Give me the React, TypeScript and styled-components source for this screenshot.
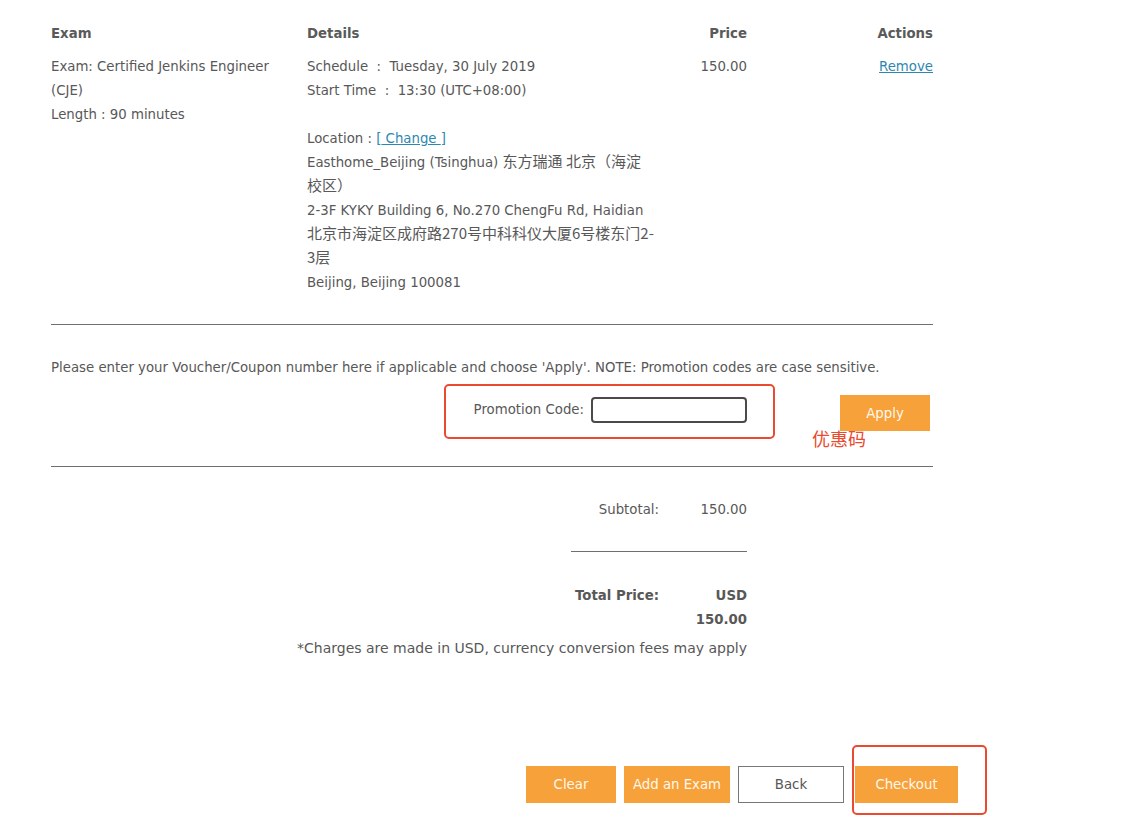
import React from "react";
import styled, { createGlobalStyle } from "styled-components";

const GlobalStyle = createGlobalStyle`
  body {
    margin: 0;
    background: #ffffff;
    font-family: "DejaVu Sans", "Noto Sans CJK SC", sans-serif;
    font-size: 13.3px;
    line-height: 24px;
    color: #585858;
  }
`;

const ORANGE = "#f7a13a";
const LINK = "#2d88b0";
const RED = "#ea4a30";

const Page = styled.div`
  padding: 22px 0 40px 51px;
  width: 907px;
`;

const Table = styled.div`
  width: 882px;
  display: grid;
  grid-template-columns: 256px 350px 90px 186px;
  padding-bottom: 29px;
  border-bottom: 1px solid #6f6f6f;
`;

const HeadCell = styled.div<{ $right?: boolean }>`
  font-weight: bold;
  color: #5a5a5a;
  margin-bottom: 9px;
  text-align: ${(p) => (p.$right ? "right" : "left")};
`;

const Cell = styled.div<{ $right?: boolean; $pad?: number }>`
  text-align: ${(p) => (p.$right ? "right" : "left")};
  padding-right: ${(p) => p.$pad ?? 0}px;
`;

const Line = styled.div`
  line-height: 24px;
`;

const Blank = styled.div`
  height: 24px;
`;

const Han = styled.span`
  font-family: "Noto Sans CJK SC", sans-serif;
  font-size: 15px;
  line-height: 1;
`;

const Link = styled.a`
  color: ${LINK};
  text-decoration: underline;
  cursor: pointer;
`;

const Bracket = styled.span`
  color: ${LINK};
`;

const PromoSection = styled.div`
  width: 882px;
  border-bottom: 1px solid #6f6f6f;
  padding-top: 31px;
  padding-bottom: 35px;
`;

const Note = styled.p`
  margin: 0;
`;

const PromoRow = styled.div`
  position: relative;
  margin-top: 15px;
  display: flex;
  align-items: flex-start;
`;

const PromoField = styled.label`
  width: 696px;
  margin-top: 2px;
  display: flex;
  justify-content: flex-end;
  align-items: center;
  gap: 7px;
  height: 26px;
`;

const CodeInput = styled.input`
  box-sizing: border-box;
  width: 156px;
  height: 26px;
  border: 2px solid #4a4a4a;
  border-radius: 4px;
  background: #fff;
  margin: 0;
  padding: 0 4px;
`;

const Button = styled.button<{ $variant?: "primary" | "plain"; $w: number }>`
  box-sizing: border-box;
  width: ${(p) => p.$w}px;
  height: 37px;
  margin: 0;
  padding: 0;
  border: ${(p) => (p.$variant === "plain" ? "1px solid #777" : "none")};
  background: ${(p) => (p.$variant === "plain" ? "#ffffff" : ORANGE)};
  color: ${(p) => (p.$variant === "plain" ? "#555" : "#fff8ec")};
  font-family: "DejaVu Sans", sans-serif;
  font-size: 13.3px;
  position: relative;
  cursor: pointer;
`;

const ApplyButton = styled(Button)`
  margin-left: 93px;
  height: 36px;
`;

const Annotation = styled.div<{ $top: number; $left: number; $w: number; $h: number }>`
  position: absolute;
  top: ${(p) => p.$top}px;
  left: ${(p) => p.$left}px;
  width: ${(p) => p.$w}px;
  height: ${(p) => p.$h}px;
  box-sizing: border-box;
  border: 2px solid ${RED};
  border-radius: 5px;
  pointer-events: none;
`;

const AnnotationText = styled.span`
  position: absolute;
  top: 31px;
  left: 761px;
  font-family: "Noto Sans CJK SC", sans-serif;
  font-size: 18px;
  line-height: 24px;
  color: ${RED};
`;

const Summary = styled.div`
  width: 696px;
  padding-top: 31px;
  display: flex;
  flex-direction: column;
  align-items: flex-end;
`;

const SumRow = styled.div<{ $bold?: boolean }>`
  display: grid;
  grid-template-columns: 120px 88px;
  font-weight: ${(p) => (p.$bold ? "bold" : "normal")};
`;

const SumLabel = styled.div`
  text-align: right;
`;

const SumValue = styled.div`
  text-align: right;
  padding-left: 24px;
`;

const Rule = styled.div`
  width: 176px;
  height: 1px;
  background: #6f6f6f;
  margin: 29px 0 32px;
`;

const Disclaimer = styled.div`
  margin-top: 4px;
  text-align: right;
  font-size: 14px;
`;

const ButtonBar = styled.div`
  margin-top: 106px;
  display: flex;
  justify-content: flex-end;
  gap: 8px;
`;

const BackButton = styled(Button)`
  margin-right: 3px;
`;

export default function App() {
  return (
    <>
      <GlobalStyle />
      <Page>
        <Table>
          <HeadCell>Exam</HeadCell>
          <HeadCell>Details</HeadCell>
          <HeadCell $right>Price</HeadCell>
          <HeadCell $right>Actions</HeadCell>

          <Cell $pad={24}>
            <Line>Exam: Certified Jenkins Engineer (CJE)</Line>
            <Line>Length : 90 minutes</Line>
          </Cell>
          <Cell>
            <Line>Schedule&nbsp;&nbsp;:&nbsp;&nbsp;Tuesday, 30 July 2019</Line>
            <Line>Start Time&nbsp;&nbsp;:&nbsp;&nbsp;13:30 (UTC+08:00)</Line>
            <Blank />
            <Line>
              Location : <Bracket>[</Bracket>
              <Link>&nbsp;Change&nbsp;</Link>
              <Bracket>]</Bracket>
            </Line>
            <Line>
              Easthome_Beijing (Tsinghua) <Han>东方瑞通 北京（海淀<br />校区）</Han>
            </Line>
            <Line>
              2-3F KYKY Building 6, No.270 ChengFu Rd, Haidian <Han>北京市海淀区成府路270号中科科仪大厦6号楼东门2-3层</Han>
            </Line>
            <Line>Beijing, Beijing 100081</Line>
          </Cell>
          <Cell $right>150.00</Cell>
          <Cell $right>
            <Link>Remove</Link>
          </Cell>
        </Table>

        <PromoSection>
          <Note>
            Please enter your Voucher/Coupon number here if applicable and choose 'Apply'. NOTE: Promotion codes are case sensitive.
          </Note>
          <PromoRow>
            <PromoField>
              Promotion Code:
              <CodeInput type="text" />
            </PromoField>
            <ApplyButton $w={90}>Apply</ApplyButton>
            <Annotation $top={-11} $left={393} $w={331} $h={55} />
            <AnnotationText>优惠码</AnnotationText>
          </PromoRow>
        </PromoSection>

        <Summary>
          <SumRow>
            <SumLabel>Subtotal:</SumLabel>
            <SumValue>150.00</SumValue>
          </SumRow>
          <Rule />
          <SumRow $bold>
            <SumLabel>Total Price:</SumLabel>
            <SumValue>USD 150.00</SumValue>
          </SumRow>
          <Disclaimer>*Charges are made in USD, currency conversion fees may apply</Disclaimer>
        </Summary>

        <ButtonBar>
          <Button $w={90}>Clear</Button>
          <Button $w={106}>Add an Exam</Button>
          <BackButton $w={106} $variant="plain">Back</BackButton>
          <Button $w={103}>
            Checkout
            <Annotation $top={-21} $left={-3} $w={135} $h={70} />
          </Button>
        </ButtonBar>
      </Page>
    </>
  );
}
